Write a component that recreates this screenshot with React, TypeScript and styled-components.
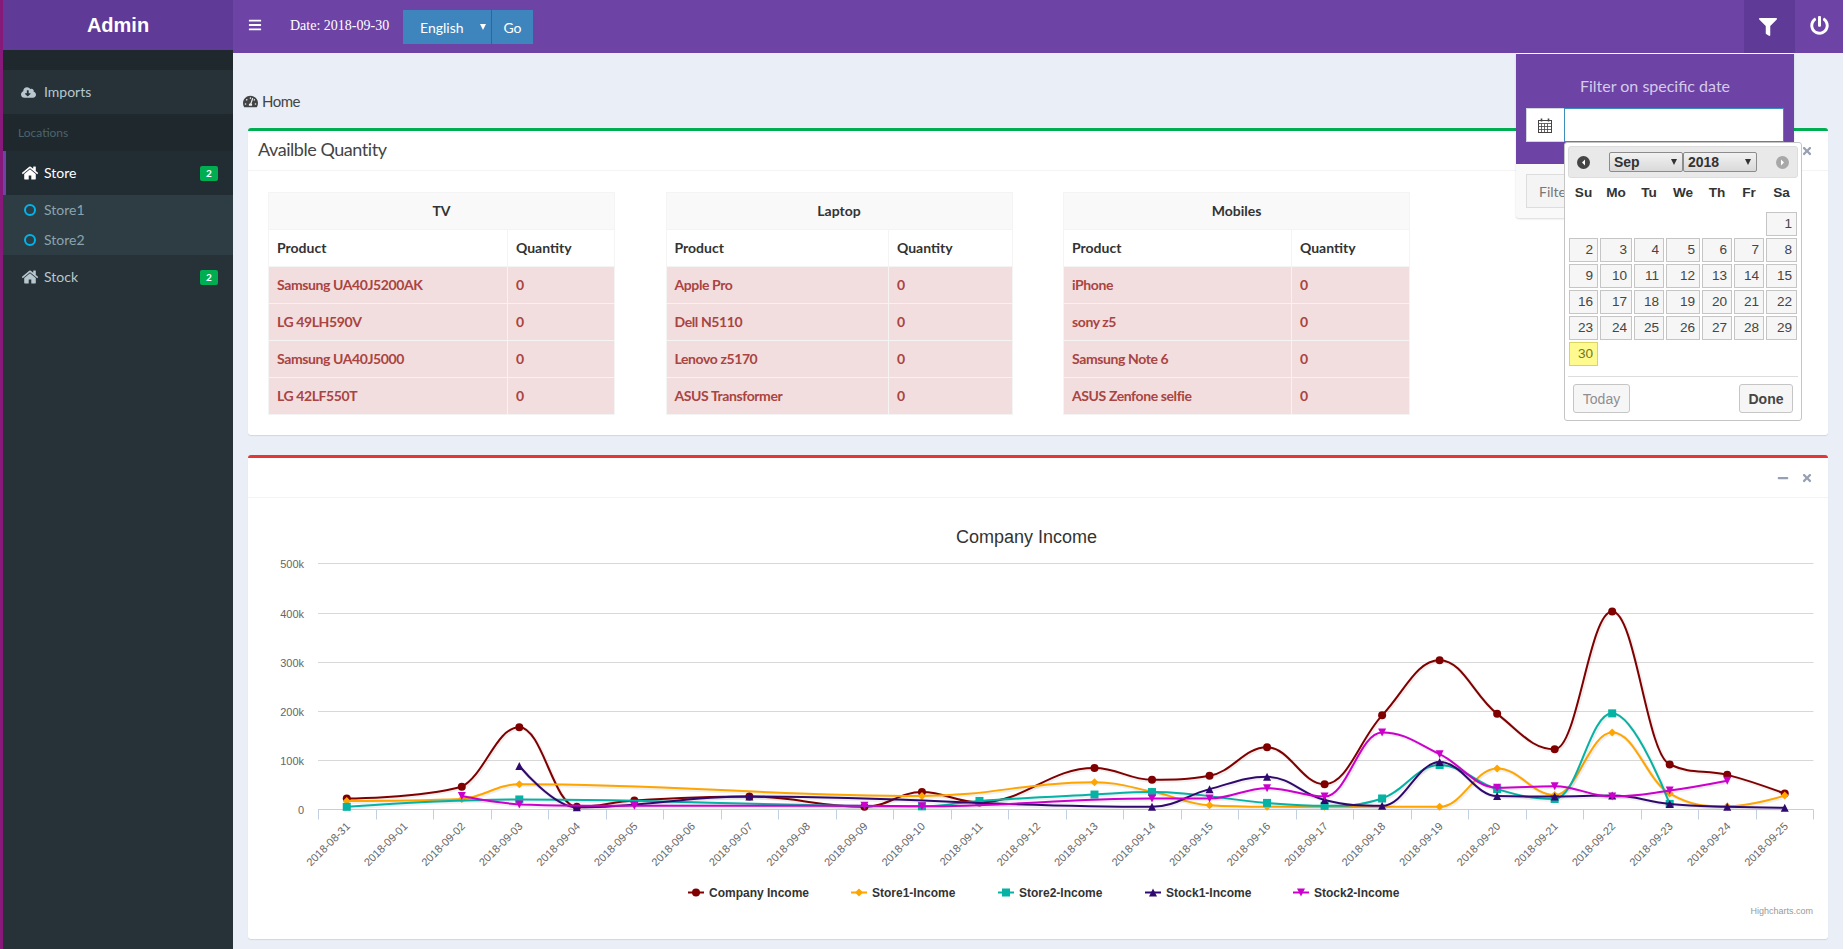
import * as React from 'react'
import styled, { createGlobalStyle } from 'styled-components'
import { FaBars, FaCloudDownloadAlt, FaFilter, FaMinus, FaPowerOff, FaTachometerAlt, FaTimes } from 'react-icons/fa'

const GlobalStyle = createGlobalStyle`
  html, body {
    margin: 0;
    padding: 0;
    height: 100%;
    background: #fff;
    overflow: hidden;
  }
  body {
    font-family: Lato, "Noto Sans", sans-serif;
    font-size: 14px;
    color: #333;
  }
  * { box-sizing: border-box; }
`

const Shell = styled.div`
  position: relative;
  display: flex;
  width: 1843px;
  height: 949px;
  background: #eaeef6;
  border-left: 3px solid #86197a;
  overflow: hidden;

  &::before {
    content: '';
    position: absolute;
    left: -3px;
    top: 44px;
    width: 2px;
    height: 6px;
    background: #d8d8d8;
  }
`

const Aside = styled.aside`
  width: 230px;
  flex: none;
  display: flex;
  flex-direction: column;
  background: #263238;
`

const Logo = styled.div`
  height: 50px;
  line-height: 50px;
  text-align: center;
  background: #5f3a96;
  color: #fff;
  font-family: "Liberation Sans", Arial, sans-serif;
  font-size: 20px;
  font-weight: 700;
`

const TopGap = styled.div`
  height: 20px;
  background: #1f292d;
`

const MenuHeader = styled.div`
  height: 37px;
  line-height: 37px;
  padding-left: 15px;
  background: #1f292d;
  color: #4b646f;
  font-size: 12px;
`

const MenuRow = styled.div<{ $active?: boolean }>`
  height: 44px;
  display: flex;
  align-items: center;
  padding: 0 15px 0 ${p => (p.$active ? 15 : 18)}px;
  background: ${p => (p.$active ? '#222c33' : '#263238')};
  border-left: ${p => (p.$active ? '3px solid #6d43a6' : '0')};
  color: ${p => (p.$active ? '#fff' : '#b8c7ce')};
  font-size: 14px;
`

const MenuIcon = styled.span`
  width: 23px;
  flex: none;
  display: flex;
  align-items: center;
  font-size: 15px;
`

const MenuLabel = styled.span`
  flex: 1;
  padding-bottom: 2px;
`

const Badge = styled.span`
  width: 18px;
  height: 15px;
  line-height: 15px;
  border-radius: 2px;
  background: #00ad50;
  color: #fff;
  text-align: center;
  font-size: 10px;
  font-weight: 700;
`

const Tree = styled.div`
  height: 60px;
  background: #2e3d44;
`

const TreeRow = styled.div`
  height: 30px;
  display: flex;
  align-items: center;
  padding: 0 0 2px 21px;
  color: #8aa4af;
  font-size: 14px;
`

const TreeIcon = styled.svg`
  display: block;
  width: 12px;
  height: 12px;
  margin: 2px 8px 0 0;
  fill: none;
  stroke: #00b5ea;
  stroke-width: 2;
`

const Main = styled.div`
  flex: 1;
  min-width: 0;
  display: flex;
  flex-direction: column;
`

const Navbar = styled.nav`
  height: 53px;
  flex: none;
  display: flex;
  align-items: flex-start;
  background: #6d43a6;
  color: #fff;
`

const Toggle = styled.span`
  display: flex;
  width: 57px;
  height: 50px;
  padding-left: 15px;
  align-items: center;
  font-size: 14px;
`

const DateText = styled.span`
  width: 113px;
  line-height: 51px;
  font-family: "Liberation Serif", "Times New Roman", serif;
  font-size: 14px;
`

const SelectWrap = styled.span<{ $arrow: string; $right: number; $top: number }>`
  position: relative;
  display: block;

  &::after {
    content: '';
    position: absolute;
    right: ${p => p.$right}px;
    top: ${p => p.$top}px;
    border-left: 3px solid transparent;
    border-right: 3px solid transparent;
    border-top: 6px solid ${p => p.$arrow};
    pointer-events: none;
  }
`

const LangSelect = styled.select`
  display: block;
  width: 88px;
  height: 34px;
  padding: 0 0 0 17px;
  border: 0;
  border-radius: 0;
  appearance: none;
  background: #3e85bd;
  color: #fff;
  font-family: Lato, sans-serif;
  font-size: 14px;
`

const LangSlot = styled.div`
  margin-top: 10px;
`

const GoButton = styled.button`
  width: 41px;
  height: 34px;
  margin: 10px 0 0 1px;
  padding: 0;
  border: 0;
  background: #3e85bd;
  color: #fff;
  font-family: Lato, sans-serif;
  font-size: 14px;
`

const NavSpacer = styled.div`
  flex: 1;
`

const FilterTab = styled.div`
  position: relative;
  width: 51px;
  height: 53px;
  display: flex;
  align-items: center;
  justify-content: center;
  padding: 1px 4px 0 0;
  background: #5f3a96;
  font-size: 18px;
`

const PowerTab = styled.div`
  width: 48px;
  height: 53px;
  display: flex;
  align-items: center;
  justify-content: center;
  padding-bottom: 3px;
  font-size: 19px;
`

const Dropdown = styled.div`
  position: absolute;
  top: 53px;
  right: 1px;
  width: 278px;
  border-top: 1px solid #fff;
  background: #f9f9f9;
  border-radius: 0 0 3px 3px;
  box-shadow: 0 1px 2px rgba(0, 0, 0, 0.15);
`

const DropHead = styled.div`
  height: 110px;
  padding: 21px 10px 0;
  background: #6d43a6;
`

const DropTitle = styled.div`
  height: 33px;
  line-height: 22px;
  text-align: center;
  color: #d6cbe8;
  font-size: 16px;
`

const InputGroup = styled.div`
  display: flex;
  height: 34px;
`

const Addon = styled.span`
  width: 38px;
  display: flex;
  align-items: center;
  justify-content: center;
  padding-right: 2px;
  background: #fff;
  border: 1px solid #d2d6de;
  border-right: 0;
`

const DateInput = styled.input`
  flex: 1;
  min-width: 0;
  border: 1px solid #3c8dbc;
  outline: 0;
  background: #fff;
`

const DropFoot = styled.div`
  height: 54px;
  padding: 10px;
`

const FilterButton = styled.button`
  width: 70px;
  height: 34px;
  padding: 0 12px;
  text-align: left;
  border: 1px solid #ddd;
  border-radius: 0;
  background: #f4f4f4;
  color: #777;
  font-family: Lato, sans-serif;
  font-size: 14px;
`

const Picker = styled.div`
  position: absolute;
  top: 88px;
  left: 48px;
  width: 238px;
  height: 279px;
  padding: 3px;
  background: #fff;
  border: 1px solid #c5c5c5;
  border-radius: 3px;
  font-family: "Liberation Sans", Arial, sans-serif;
  font-size: 13.6px;
  color: #333;
`

const PickerHead = styled.div`
  height: 32px;
  display: flex;
  align-items: center;
  padding: 0 8px;
  background: #e9e9e9;
  border: 1px solid #ddd;
  border-radius: 3px;
`

const NavArrow = styled.svg`
  flex: none;
  display: block;
`

const PickerSelects = styled.div`
  flex: 1;
  display: flex;
  justify-content: center;
`

const PickerSelect = styled.select`
  display: block;
  width: 74px;
  height: 20px;
  padding: 0 0 0 4px;
  appearance: none;
  border: 1px solid #8c8c8c;
  border-radius: 2px;
  background: linear-gradient(#f2f2f2, #d9d9d9);
  font-family: "Liberation Sans", Arial, sans-serif;
  font-size: 14px;
  font-weight: 700;
  color: #333;
`

const CalGrid = styled.div`
  display: grid;
  grid-template-columns: 29px 32px 30px 34px 30px 30px 31px;
  column-gap: 2px;
  row-gap: 2px;
  margin: 0 0 0 1px;
`

const WeekDay = styled.div`
  height: 32px;
  line-height: 30px;
  text-align: center;
  font-weight: 700;
  color: #333;
`

const Day = styled.div<{ $today?: boolean; $first?: boolean }>`
  height: 24px;
  line-height: 22px;
  padding-right: 4px;
  text-align: right;
  grid-column: ${p => (p.$first ? 7 : 'auto')};
  background: ${p => (p.$today ? '#fffa90' : '#f6f6f6')};
  border: 1px solid ${p => (p.$today ? '#dad55e' : '#c5c5c5')};
  color: ${p => (p.$today ? '#777620' : '#454545')};
`

const PickerFoot = styled.div`
  display: flex;
  justify-content: space-between;
  margin-top: 10px;
  padding: 7px 5px 0 5px;
  border-top: 1px solid #ddd;
`

const PickerButton = styled.button<{ $primary?: boolean }>`
  height: 29px;
  width: ${p => (p.$primary ? 54 : 57)}px;
  padding: 0;
  background: #f6f6f6;
  border: 1px solid #c5c5c5;
  border-radius: 3px;
  color: ${p => (p.$primary ? '#454545' : '#8f8f8f')};
  font-family: "Liberation Sans", Arial, sans-serif;
  font-size: 14px;
  font-weight: ${p => (p.$primary ? 700 : 400)};
`

const Content = styled.main`
  flex: 1;
  padding: 38px 15px 0;
`

const Crumb = styled.div`
  height: 20px;
  margin: 0 0 17px -5px;
  display: flex;
  align-items: center;
  gap: 4px;
  color: #444;
  font-size: 15px;
  letter-spacing: -0.5px;
`

const Box = styled.section<{ $accent: string }>`
  margin-bottom: 20px;
  background: #fff;
  border-top: 3px solid ${p => p.$accent};
  border-radius: 3px;
  box-shadow: 0 1px 1px rgba(0, 0, 0, 0.1);
`

const BoxHeader = styled.header`
  height: 40px;
  display: flex;
  align-items: center;
  padding: 0 15px 0 10px;
  border-bottom: 1px solid #f4f4f4;
`

const BoxTitle = styled.h3`
  flex: 1;
  margin: 0;
  padding-bottom: 3px;
  color: #444;
  font-size: 18px;
  font-weight: 400;
  letter-spacing: -0.45px;
`

const BoxTool = styled.span`
  width: 24px;
  display: flex;
  justify-content: flex-end;
  color: #97a0b3;
  font-size: 12px;
`

const TablesBody = styled.div`
  display: grid;
  grid-template-columns: repeat(3, 347px);
  column-gap: 50.5px;
  padding: 21px 20px 20px;
`

const Table = styled.table`
  width: 347px;
  table-layout: fixed;
  border-collapse: collapse;
`

const Cell = styled.td<{ $kind: 'title' | 'head' | 'danger' }>`
  height: 37px;
  padding: 0 8px 2px;
  border: 1px solid #f4f4f4;
  font-weight: 700;
  font-size: 14px;
  letter-spacing: ${p => (p.$kind === 'danger' ? '-0.4px' : '0')};
  text-align: ${p => (p.$kind === 'title' ? 'center' : 'left')};
  background: ${p => (p.$kind === 'title' ? '#f9f9f9' : p.$kind === 'danger' ? '#f2dede' : '#fff')};
  color: ${p => (p.$kind === 'danger' ? '#a94442' : '#333')};
`

const ChartBody = styled.div`
  padding: 10px;
`

const ChartSvg = styled.svg`
  display: block;
  width: 1560px;
  height: 421px;
  font-family: "Liberation Sans", Arial, sans-serif;
`

type Point = [number, number]
type MarkerKind = 'circle' | 'diamond' | 'square' | 'triangle' | 'triangle-down'

interface Series {
  name: string
  color: string
  marker: MarkerKind
  legendX: number
  points: Point[]
}

const series: Series[] = [
  {
    name: 'Company Income',
    color: '#800000',
    marker: 'circle',
    legendX: 688,
    points: [[0, 22], [2, 46], [3, 167], [4, 5], [5, 18], [7, 26], [9, 5], [10, 35], [11, 14], [13, 84], [14, 60], [15, 68], [16, 126], [17, 51], [18, 191], [19, 303], [20, 194], [21, 122], [22, 402], [23, 91], [24, 70], [25, 32]],
  },
  {
    name: 'Store1-Income',
    color: '#ffa500',
    marker: 'diamond',
    legendX: 851,
    points: [[0, 17], [2, 21], [3, 51], [10, 27], [13, 55], [14, 36], [15, 8], [16, 5], [17, 5], [19, 5], [20, 83], [21, 29], [22, 156], [23, 32], [24, 6], [25, 28]],
  },
  {
    name: 'Store2-Income',
    color: '#05b2a3',
    marker: 'square',
    legendX: 998,
    points: [[0, 5], [3, 20], [10, 6], [11, 17], [13, 30], [14, 35], [16, 13], [17, 7], [18, 22], [19, 90], [20, 41], [21, 21], [22, 195], [23, 11]],
  },
  {
    name: 'Stock1-Income',
    color: '#30096f',
    marker: 'triangle',
    legendX: 1145,
    points: [[3, 88], [4, 4], [7, 26], [14, 5], [15, 41], [16, 66], [17, 19], [18, 7], [19, 96], [20, 27], [21, 26], [22, 28], [23, 11], [24, 5], [25, 3]],
  },
  {
    name: 'Stock2-Income',
    color: '#cc00cc',
    marker: 'triangle-down',
    legendX: 1293,
    points: [[2, 27], [3, 10], [5, 7], [9, 7], [10, 6], [14, 22], [15, 22], [16, 43], [17, 26], [18, 156], [19, 112], [20, 44], [21, 47], [22, 26], [23, 38], [24, 58]],
  },
]

const plotLeft = 318
const plotRight = 1813.5
const slot = (plotRight - plotLeft) / 26
const xAt = (i: number) => plotLeft + slot * (i + 0.5)
const yAt = (v: number) => 809.3 - v * 0.492

// same control points as a highcharts spline
function splinePath(pts: Point[]) {
  const p = pts.map(([i, v]) => [xAt(i), yAt(v)])
  let d = `M ${p[0][0]} ${p[0][1]}`
  const controls = p.map((cur, i) => {
    const last = p[i - 1]
    const next = p[i + 1]
    if (!last || !next) return null
    const [x, y] = cur
    const lx = (1.5 * x + last[0]) / 2.5
    let ly = (1.5 * y + last[1]) / 2.5
    const rx = (1.5 * x + next[0]) / 2.5
    let ry = (1.5 * y + next[1]) / 2.5
    const correction = ((ry - ly) * (rx - x)) / (rx - lx) + y - ry
    ly += correction
    ry += correction
    if (ly > last[1] && ly > y) {
      ly = Math.max(last[1], y)
      ry = 2 * y - ly
    } else if (ly < last[1] && ly < y) {
      ly = Math.min(last[1], y)
      ry = 2 * y - ly
    }
    if (ry > next[1] && ry > y) {
      ry = Math.max(next[1], y)
      ly = 2 * y - ry
    } else if (ry < next[1] && ry < y) {
      ry = Math.min(next[1], y)
      ly = 2 * y - ry
    }
    return { lx, ly, rx, ry }
  })
  for (let i = 1; i < p.length; i++) {
    const a = controls[i - 1]
    const b = controls[i]
    const [x, y] = p[i]
    const c1x = a ? a.rx : p[i - 1][0]
    const c1y = a ? a.ry : p[i - 1][1]
    const c2x = b ? b.lx : x
    const c2y = b ? b.ly : y
    d += ` C ${c1x} ${c1y} ${c2x} ${c2y} ${x} ${y}`
  }
  return d
}

function Marker({ kind, x, y, color }: { kind: MarkerKind; x: number; y: number; color: string }) {
  if (kind === 'circle') return <circle cx={x} cy={y} r={4} fill={color} />
  if (kind === 'square') return <rect x={x - 4} y={y - 4} width={8} height={8} fill={color} />
  if (kind === 'diamond') return <path d={`M ${x} ${y - 4} L ${x + 4} ${y} L ${x} ${y + 4} L ${x - 4} ${y} Z`} fill={color} />
  if (kind === 'triangle') return <path d={`M ${x} ${y - 4} L ${x + 4} ${y + 4} L ${x - 4} ${y + 4} Z`} fill={color} />
  return <path d={`M ${x - 4} ${y - 4} L ${x + 4} ${y - 4} L ${x} ${y + 4} Z`} fill={color} />
}

const dates = ['2018-08-31', ...Array.from({ length: 25 }, (_, i) => `2018-09-${String(i + 1).padStart(2, '0')}`)]
const gridLines = [
  { y: 563.5, label: '500k' },
  { y: 613.5, label: '400k' },
  { y: 662.5, label: '300k' },
  { y: 711.5, label: '200k' },
  { y: 760.5, label: '100k' },
]

function IncomeChart() {
  return (
    <ChartSvg viewBox="258 508 1560 421">
      <text x={1026.5} y={543} textAnchor="middle" fontSize={18} fill="#333">Company Income</text>
      {gridLines.map(g => (
        <g key={g.label}>
          <line x1={plotLeft} x2={plotRight} y1={g.y} y2={g.y} stroke="#d8d8d8" />
          <text x={304} y={g.y + 4} textAnchor="end" fontSize={11} fill="#666">{g.label}</text>
        </g>
      ))}
      <text x={304} y={813.5} textAnchor="end" fontSize={11} fill="#666">0</text>
      <line x1={plotLeft} x2={plotRight} y1={809.5} y2={809.5} stroke="#c0d0e0" />
      {dates.map((d, i) => {
        const tick = Math.round(plotLeft + slot * i) + 0.5
        return <line key={d} x1={tick} x2={tick} y1={809.5} y2={819.5} stroke="#c0d0e0" />
      })}
      <line x1={plotRight} x2={plotRight} y1={809.5} y2={819.5} stroke="#c0d0e0" />
      {dates.map((d, i) => (
        <text key={d} x={xAt(i) + 4} y={827} textAnchor="end" fontSize={11} fill="#666" transform={`rotate(-45 ${xAt(i) + 4} 827)`}>{d}</text>
      ))}
      {series.map(s => {
        const path = splinePath(s.points)
        return (
          <g key={s.name}>
            <path d={path} fill="none" stroke="#000" strokeOpacity={0.06} strokeWidth={4} transform="translate(1 1)" />
            <path d={path} fill="none" stroke={s.color} strokeWidth={2} />
            {s.points.map(([i, v]) => (
              <Marker key={i} kind={s.marker} x={xAt(i)} y={yAt(v)} color={s.color} />
            ))}
          </g>
        )
      })}
      {series.map(s => (
        <g key={s.name}>
          <line x1={s.legendX} x2={s.legendX + 16} y1={892.5} y2={892.5} stroke={s.color} strokeWidth={2} />
          <Marker kind={s.marker} x={s.legendX + 8} y={892.5} color={s.color} />
          <text x={s.legendX + 21} y={897} fontSize={12} fontWeight={700} fill="#333">{s.name}</text>
        </g>
      ))}
      <text x={1813} y={914} textAnchor="end" fontSize={9} fill="#999">Highcharts.com</text>
    </ChartSvg>
  )
}

const tables = [
  { title: 'TV', first: 239, rows: ['Samsung UA40J5200AK', 'LG 49LH590V', 'Samsung UA40J5000', 'LG 42LF550T'] },
  { title: 'Laptop', first: 222.5, rows: ['Apple Pro', 'Dell N5110', 'Lenovo z5170', 'ASUS Transformer'] },
  { title: 'Mobiles', first: 228, rows: ['iPhone', 'sony z5', 'Samsung Note 6', 'ASUS Zenfone selfie'] },
]

const weekDays = ['Su', 'Mo', 'Tu', 'We', 'Th', 'Fr', 'Sa']
const days = Array.from({ length: 30 }, (_, i) => i + 1)

function HomeIcon() {
  return (
    <svg width="18" height="18" viewBox="0 0 1792 1792" fill="currentColor">
      <path d="M1472 992v480q0 26-19 45t-45 19h-384v-384h-256v384h-384q-26 0-45-19t-19-45v-480q0-1 .5-3t.5-3l575-474 575 474q1 2 1 6zm223-69l-62 74q-8 9-21 11h-3q-13 0-21-7l-692-577-692 577q-12 8-24 7-13-2-21-11l-62-74q-8-10-7-23.5t11-21.5l719-599q32-26 76-26t76 26l244 204v-195q0-14 9-23t23-9h192q14 0 23 9t9 23v408l219 182q10 8 11 21.5t-7 23.5z" />
    </svg>
  )
}

function RingIcon() {
  return (
    <TreeIcon viewBox="0 0 12 12">
      <circle cx="6" cy="6" r="5" />
    </TreeIcon>
  )
}

function CalendarIcon() {
  return (
    <svg width="14" height="15" viewBox="0 0 14 15" fill="none" stroke="#444" strokeWidth="1">
      <rect x="0.5" y="2.5" width="13" height="12" />
      <path d="M0.5 5.5H13.5M0.5 8.5H13.5M0.5 11.5H13.5M3.5 5.5V14.5M6.5 5.5V14.5M9.5 5.5V14.5" strokeWidth="0.8" />
      <path d="M3.5 0.5V3.5M10.5 0.5V3.5" strokeWidth="1.6" />
    </svg>
  )
}

function PickerArrow({ dir, fill }: { dir: 'prev' | 'next'; fill: string }) {
  return (
    <NavArrow width="13" height="13" viewBox="0 0 13 13">
      <circle cx="6.5" cy="6.5" r="6.5" fill={fill} />
      <path d={dir === 'prev' ? 'M8 3.5V9.5L5 6.5Z' : 'M5 3.5V9.5L8 6.5Z'} fill="#fff" />
    </NavArrow>
  )
}

function App() {
  return (
    <Shell>
      <GlobalStyle />
      <Aside>
        <Logo>Admin</Logo>
        <TopGap />
        <MenuRow>
          <MenuIcon><FaCloudDownloadAlt /></MenuIcon>
          <MenuLabel>Imports</MenuLabel>
        </MenuRow>
        <MenuHeader>Locations</MenuHeader>
        <MenuRow $active>
          <MenuIcon><HomeIcon /></MenuIcon>
          <MenuLabel>Store</MenuLabel>
          <Badge>2</Badge>
        </MenuRow>
        <Tree>
          <TreeRow><RingIcon />Store1</TreeRow>
          <TreeRow><RingIcon />Store2</TreeRow>
        </Tree>
        <MenuRow>
          <MenuIcon><HomeIcon /></MenuIcon>
          <MenuLabel>Stock</MenuLabel>
          <Badge>2</Badge>
        </MenuRow>
      </Aside>
      <Main>
        <Navbar>
          <Toggle><FaBars /></Toggle>
          <DateText>Date: 2018-09-30</DateText>
          <LangSlot>
            <SelectWrap $arrow="#fff" $right={5} $top={14}>
              <LangSelect defaultValue="English">
                <option>English</option>
              </LangSelect>
            </SelectWrap>
          </LangSlot>
          <GoButton>Go</GoButton>
          <NavSpacer />
          <FilterTab>
            <FaFilter />
            <Dropdown>
              <DropHead>
                <DropTitle>Filter on specific date</DropTitle>
                <InputGroup>
                  <Addon><CalendarIcon /></Addon>
                  <DateInput />
                </InputGroup>
              </DropHead>
              <DropFoot>
                <FilterButton>Filter</FilterButton>
              </DropFoot>
              <Picker>
                <PickerHead>
                  <PickerArrow dir="prev" fill="#454545" />
                  <PickerSelects>
                    <SelectWrap $arrow="#333" $right={6} $top={7}>
                      <PickerSelect defaultValue="Sep"><option>Sep</option></PickerSelect>
                    </SelectWrap>
                    <SelectWrap $arrow="#333" $right={6} $top={7}>
                      <PickerSelect defaultValue="2018"><option>2018</option></PickerSelect>
                    </SelectWrap>
                  </PickerSelects>
                  <PickerArrow dir="next" fill="#a8a8a8" />
                </PickerHead>
                <CalGrid>
                  {weekDays.map(d => <WeekDay key={d}>{d}</WeekDay>)}
                  {days.map(d => <Day key={d} $first={d === 1} $today={d === 30}>{d}</Day>)}
                </CalGrid>
                <PickerFoot>
                  <PickerButton>Today</PickerButton>
                  <PickerButton $primary>Done</PickerButton>
                </PickerFoot>
              </Picker>
            </Dropdown>
          </FilterTab>
          <PowerTab><FaPowerOff /></PowerTab>
        </Navbar>
        <Content>
          <Crumb><FaTachometerAlt />Home</Crumb>
          <Box $accent="#00ad50">
            <BoxHeader>
              <BoxTitle>Availble Quantity</BoxTitle>
              <BoxTool><FaMinus /></BoxTool>
              <BoxTool><FaTimes /></BoxTool>
            </BoxHeader>
            <TablesBody>
              {tables.map(t => (
                <Table key={t.title}>
                  <colgroup>
                    <col style={{ width: t.first }} />
                    <col />
                  </colgroup>
                  <tbody>
                    <tr><Cell $kind="title" colSpan={2}>{t.title}</Cell></tr>
                    <tr><Cell $kind="head">Product</Cell><Cell $kind="head">Quantity</Cell></tr>
                    {t.rows.map(r => (
                      <tr key={r}><Cell $kind="danger">{r}</Cell><Cell $kind="danger">0</Cell></tr>
                    ))}
                  </tbody>
                </Table>
              ))}
            </TablesBody>
          </Box>
          <Box $accent="#e53535">
            <BoxHeader>
              <BoxTitle />
              <BoxTool><FaMinus /></BoxTool>
              <BoxTool><FaTimes /></BoxTool>
            </BoxHeader>
            <ChartBody>
              <IncomeChart />
            </ChartBody>
          </Box>
        </Content>
      </Main>
    </Shell>
  )
}

export default App
